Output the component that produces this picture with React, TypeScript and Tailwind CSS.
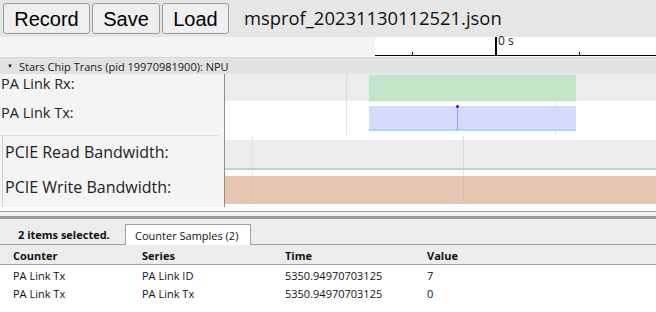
import React from "react";

const sans = { fontFamily: '"Open Sans", "Noto Sans", sans-serif' };
const arial = { fontFamily: '"Liberation Sans", Arial, sans-serif' };

function Btn({ label, w }: { label: string; w: string }) {
  return (
    <button
      className={`h-[31px] ${w} rounded-[3px] border border-[#9a9a9a] bg-[#efefef] text-[20px] leading-none text-black`}
      style={arial}
    >
      {label}
    </button>
  );
}

export default function App() {
  return (
    <div className="w-[656px] h-[312px] overflow-hidden bg-white flex flex-col" style={sans}>
      {/* toolbar */}
      <div className="h-[37px] bg-[#e6e6e6] flex items-center pl-[3px] gap-[2px] shrink-0">
        <Btn label="Record" w="w-[87px]" />
        <Btn label="Save" w="w-[68px]" />
        <Btn label="Load" w="w-[67px]" />
        <div className="ml-[13px] text-[18.4px] text-[#111] leading-none pb-[1px]" style={sans}>
          msprof_20231130112521.json
        </div>
      </div>
      {/* ruler row */}
      <div className="h-[19px] bg-[#f4f4f5] flex shrink-0">
        <div className="w-[375px]" />
        <div className="flex-1 relative bg-white border-b border-black">
          <div className="absolute left-[37px] bottom-0 w-px h-[3px] bg-black" />
          <div className="absolute left-[120px] top-0 bottom-0 w-[1.5px] bg-black" />
          <div className="absolute left-[123px] top-[-2px] text-[12px] text-[#222] leading-none">0 s</div>
          <div className="absolute left-[204px] bottom-0 w-px h-[3px] bg-black" />
        </div>
      </div>
      <div className="h-[1px] bg-[#f4f4f5] shrink-0" />
      {/* process header */}
      <div className="h-[17px] bg-[#e2e2e2] border-t border-[#d4d4d4] flex items-center text-[11px] text-[#1a1a1a] leading-none shrink-0">
        <span className="ml-[7px] mr-[6px] text-[6px]">▼</span>
        <span>Stars Chip Trans (pid 19970981900): NPU</span>
      </div>
      {/* tracks */}
      <div className="flex h-[133px] shrink-0">
        <div className="w-[225px] bg-[#f4f4f5] border-r border-[#8c8c8c] flex flex-col">
          <div className="h-[28px] text-[14.5px] leading-none pl-[1px] pt-[3px] text-[#222]">PA Link Rx:</div>
          <div className="h-[33px] text-[14.5px] leading-none pl-[1px] pt-[4px] text-[#222]">PA Link Tx:</div>
          <div className="h-[1px] w-[219px] bg-[#dedede]" />
          <div className="flex-1 ml-[2px] border-l border-[#cfcfcf] flex flex-col">
            <div className="h-[33px] text-[16px] leading-none pl-[2px] pt-[8px] text-[#222]">PCIE Read Bandwidth:</div>
            <div className="h-[33px] text-[16px] leading-none pl-[2px] pt-[10px] text-[#222]">PCIE Write Bandwidth:</div>
          </div>
        </div>
        <div className="flex-1 flex flex-col">
          {/* Rx */}
          <div className="h-[27px] bg-[#ececec] relative">
            <div className="absolute left-[121px] top-0 bottom-0 w-px bg-[#dcdcdc]" />
            <div className="absolute left-[330px] top-0 bottom-0 w-px bg-[#dcdcdc]" />
            <div className="absolute left-[144px] w-[207px] top-[1px] h-[26px] bg-[#c2e5c7] border-b border-[#b6dfbd]" />
          </div>
          {/* Tx */}
          <div className="h-[34px] bg-white relative">
            <div className="absolute left-[121px] top-0 bottom-0 w-px bg-[#e3e3e3]" />
            <div className="absolute left-[330px] top-0 bottom-0 w-px bg-[#e3e3e3]" />
            <div className="absolute left-[144px] w-[207px] top-[5px] h-[25px] bg-[#d3dbfd] border-b-2 border-[#acd6ff]" />
            <div className="absolute left-[232px] top-[5px] h-[24px] w-px bg-[#8aa6ff]" />
            <div className="absolute left-[231px] top-[4px] w-[3px] h-[3px] rounded-full bg-[#0a1fff]" />
            <div className="absolute left-[231px] top-[27px] w-[3px] h-[3px] rounded-full bg-[#8cc8ff]" />
          </div>
          <div className="h-[5px] bg-white" />
          {/* PCIE read */}
          <div className="h-[28px] bg-[#ececec] relative">
            <div className="absolute left-[238px] top-[-4px] bottom-0 w-px bg-[#dedede]" />
            <div className="absolute left-[27px] top-[-4px] bottom-0 w-px bg-[#e3e3e3]" />
          </div>
          <div className="h-[2px] bg-[#b8d4dc]" />
          <div className="h-[6px] bg-white relative">
            <div className="absolute left-[238px] top-0 bottom-0 w-px bg-[#e6e6e6]" />
            <div className="absolute left-[27px] top-0 bottom-0 w-px bg-[#e6e6e6]" />
          </div>
          {/* PCIE write */}
          <div className="h-[28px] bg-[#e7c6b3] relative">
            <div className="absolute left-[238px] top-0 bottom-0 w-px bg-[#ddbfae]" />
            <div className="absolute left-[27px] top-0 bottom-0 w-px bg-[#e0c0ae]" />
          </div>
          <div className="flex-1 bg-white" />
        </div>
      </div>
      {/* splitter */}
      <div className="h-[5px] bg-white border-b border-[#a0a0a0] shrink-0" />
      <div className="h-[4px] bg-[#f2f2f2] shrink-0" />
      <div className="h-[3px] bg-[#9a9a9a] shrink-0" />
      {/* bottom panel */}
      <div className="flex-1 bg-[#ececec] flex flex-col text-[11px] leading-none text-[#111]">
        <div className="h-[26px] flex items-end border-b border-[#a0a0a0]">
          <div className="w-[125px] h-[21px] flex items-center pl-[18px] pt-[1px] font-bold">2 items selected.</div>
          <div className="w-[126px] h-[21px] -mb-px bg-white border border-b-0 border-[#a0a0a0] flex items-center pl-[9px] pt-[1px]">
            Counter Samples (2)
          </div>
        </div>
        <div className="h-[20px] flex items-center font-bold border-b border-[#a0a0a0] pt-[2px]">
          <div className="w-[142px] pl-[13px]">Counter</div>
          <div className="w-[143px]">Series</div>
          <div className="w-[142px]">Time</div>
          <div>Value</div>
        </div>
        <div className="flex-1 bg-white pt-[1px]">
          <div className="h-[18px] flex items-center">
            <div className="w-[142px] pl-[13px]">PA Link Tx</div>
            <div className="w-[143px]">PA Link ID</div>
            <div className="w-[142px]">5350.94970703125</div>
            <div>7</div>
          </div>
          <div className="h-[18px] flex items-center">
            <div className="w-[142px] pl-[13px]">PA Link Tx</div>
            <div className="w-[143px]">PA Link Tx</div>
            <div className="w-[142px]">5350.94970703125</div>
            <div>0</div>
          </div>
        </div>
      </div>
    </div>
  );
}
